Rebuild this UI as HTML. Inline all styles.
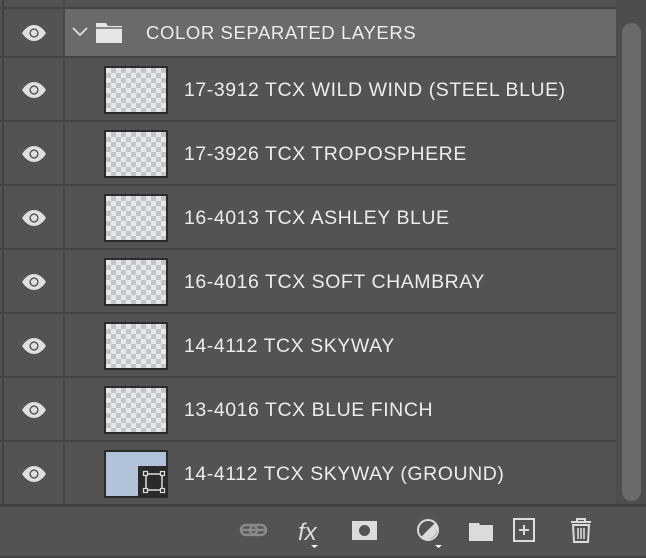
<!DOCTYPE html>
<html><head><meta charset="utf-8"><style>
body{margin:0;width:646px;height:558px;background:#535353;overflow:hidden;position:relative;font-family:"Liberation Sans",Arial,sans-serif}
.a{position:absolute}
.vl{left:2px;top:0;width:2px;height:505px;background:#424242}
.col{left:63px;top:0;width:2px;height:505px;background:#484848}
.hl{left:0;width:616px;height:2px;background:#434343}
.txt{color:#ececec;font-size:19.5px;left:184px;letter-spacing:0.55px}
.th{left:104px;width:60px;height:44px;border:2px solid #2b2b2b;
background-color:#e6e8ec;background-image:linear-gradient(45deg,#c2c6cc 25%,transparent 25%,transparent 75%,#c2c6cc 75%),linear-gradient(45deg,#c2c6cc 25%,transparent 25%,transparent 75%,#c2c6cc 75%);background-size:10px 10px;background-position:0 0,5px 5px}
</style></head><body>
<div class="a" style="left:616px;top:0;width:30px;height:505px;background:#4d4d4d"></div>
<div class="a" style="left:622px;top:23px;width:19px;height:478px;background:#6a6a6a;border-radius:10px"></div>
<div class="a" style="left:65px;top:9px;width:551px;height:47px;background:#6a6a6a"></div>
<div class="a vl"></div><div class="a col"></div>
<div class="a hl" style="top:7px"></div>
<div class="a hl" style="top:56px"></div>
<div class="a hl" style="top:120px"></div>
<div class="a hl" style="top:184px"></div>
<div class="a hl" style="top:248px"></div>
<div class="a hl" style="top:312px"></div>
<div class="a hl" style="top:376px"></div>
<div class="a hl" style="top:440px"></div>
<div class="a" style="left:0;top:504px;width:646px;height:3px;background:#424242"></div>
<div class="a" style="left:0;top:556px;width:646px;height:2px;background:#424242"></div>

<svg class="a" style="left:0;top:0" width="64" height="505">
<defs><g id="e"><path d="M-12 0C-8-6-4-8 0-8S8-6 12 0C8 6 4 8 0 8S-8 6-12 0Z" fill="#e0e0e0"/><circle r="4.6" fill="#535353"/><circle r="3.2" fill="#e0e0e0"/></g></defs>
<use href="#e" x="34" y="33"/><use href="#e" x="34" y="90"/><use href="#e" x="34" y="154"/><use href="#e" x="34" y="218"/><use href="#e" x="34" y="282"/><use href="#e" x="34" y="346"/><use href="#e" x="34" y="410"/><use href="#e" x="34" y="474"/>
</svg>
<svg class="a" style="left:70px;top:20px" width="60" height="26">
<path d="M3 8l7 7 7-7" stroke="#e0e0e0" stroke-width="1.8" fill="none"/>
<path d="M26 3h10l2 3h14v17H26z" fill="#e6e6e6"/><path d="M26 8h26" stroke="#6a6a6a" stroke-width="1.5"/>
</svg>
<div class="a txt" style="left:146px;top:22px;font-size:18.5px;letter-spacing:0.6px">COLOR SEPARATED LAYERS</div>

<div class="a th" style="top:66px"></div><div class="a txt" style="top:79px">17-3912 TCX WILD WIND (STEEL BLUE)</div>
<div class="a th" style="top:130px"></div><div class="a txt" style="top:143px">17-3926 TCX TROPOSPHERE</div>
<div class="a th" style="top:194px"></div><div class="a txt" style="top:207px">16-4013 TCX ASHLEY BLUE</div>
<div class="a th" style="top:258px"></div><div class="a txt" style="top:271px">16-4016 TCX SOFT CHAMBRAY</div>
<div class="a th" style="top:322px"></div><div class="a txt" style="top:335px">14-4112 TCX SKYWAY</div>
<div class="a th" style="top:386px"></div><div class="a txt" style="top:399px">13-4016 TCX BLUE FINCH</div>
<div class="a th" style="top:450px;background:#b2c3d9"></div>
<div class="a" style="left:138px;top:466px;width:30px;height:32px;background:#2b2b2b"></div>
<svg class="a" style="left:142px;top:470px" width="24" height="24"><rect x="4" y="4" width="16" height="16" fill="none" stroke="#ddd" stroke-width="1.5"/><g fill="#2b2b2b" stroke="#ddd" stroke-width="1.2"><rect x="1.5" y="1.5" width="4" height="4"/><rect x="18.5" y="1.5" width="4" height="4"/><rect x="1.5" y="18.5" width="4" height="4"/><rect x="18.5" y="18.5" width="4" height="4"/></g></svg>
<div class="a txt" style="top:463px">14-4112 TCX SKYWAY (GROUND)</div>

<svg class="a" style="left:230px;top:510px" width="370" height="44">
<g stroke="#8a8a8a" stroke-width="2.4" fill="none"><rect x="11" y="15" width="16" height="10" rx="5"/><rect x="20" y="15" width="16" height="10" rx="5"/></g>
<path d="M11 20h25" stroke="#8a8a8a" stroke-width="2.4"/>
<text x="68" y="30" font-family="Liberation Sans,sans-serif" font-style="italic" font-size="24" fill="#dcdcdc">fx</text>
<path d="M81 35h7l-3.5 3z" fill="#fff"/>
<rect x="122" y="11" width="25" height="19" fill="#dcdcdc"/><circle cx="134.5" cy="20.5" r="5.5" fill="#535353"/>
<circle cx="198" cy="20" r="10" fill="none" stroke="#dcdcdc" stroke-width="2"/><path d="M205 13A10 10 0 0 1 191 27Z" fill="#dcdcdc"/>
<path d="M205 35h7l-3.5 3z" fill="#fff"/>
<path d="M239 13h10l1 2h13v16h-24z" fill="#dcdcdc"/>
<rect x="284" y="9" width="20" height="22" fill="none" stroke="#dcdcdc" stroke-width="2"/><path d="M294 15v10M289 20h10" stroke="#dcdcdc" stroke-width="2"/>
<path d="M341 12h20M347 12v-3h8v3" stroke="#dcdcdc" stroke-width="2" fill="none"/>
<path d="M343 15h16l-1 17h-14z" fill="none" stroke="#dcdcdc" stroke-width="2"/>
<path d="M348 18v11M351 18v11M354 18v11" stroke="#dcdcdc" stroke-width="1.6"/>
</svg>
</body></html>
